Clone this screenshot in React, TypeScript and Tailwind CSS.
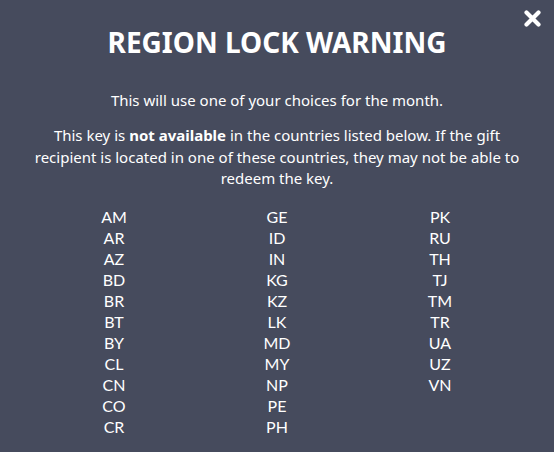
const columns = [
  ["AM", "AR", "AZ", "BD", "BR", "BT", "BY", "CL", "CN", "CO", "CR"],
  ["GE", "ID", "IN", "KG", "KZ", "LK", "MD", "MY", "NP", "PE", "PH"],
  ["PK", "RU", "TH", "TJ", "TM", "TR", "UA", "UZ", "VN"],
];

function CloseIcon() {
  return (
    <svg width="17" height="17" viewBox="0 0 17 17" aria-hidden="true">
      <path
        d="M2.5 2.5 L14.5 14.5 M14.5 2.5 L2.5 14.5"
        stroke="#ffffff"
        strokeWidth="4.2"
        strokeLinecap="round"
      />
    </svg>
  );
}

export default function App() {
  return (
    <div
      className="relative w-[554px] h-[452px] bg-[#464b5d] text-white overflow-hidden"
      style={{ fontFamily: '"Noto Sans", sans-serif' }}
    >
      <button className="absolute right-[13px] top-[10px] p-0 leading-none">
        <CloseIcon />
      </button>

      <div className="flex flex-col items-center px-[26px] pt-[26px]">
        <h1 className="text-[28px] leading-[32px] font-bold uppercase">
          Region Lock Warning
        </h1>

        <p className="mt-[31px] text-[15px] leading-[22px] text-center">
          This will use one of your choices for the month.
        </p>

        <p className="mt-[14px] text-[15px] leading-[21.5px] text-center">
          This key is <strong className="font-bold">not available</strong> in
          the countries listed below. If the gift recipient is located in one
          of these countries, they may not be able to redeem the key.
        </p>

        <div
          className="mt-[16px] grid grid-cols-3 w-[489px] text-[16px] leading-[21px]"
          style={{ fontFamily: "Lato, sans-serif" }}
        >
          {columns.map((col, i) => (
            <ul key={i} className="flex flex-col items-center">
              {col.map((code) => (
                <li key={code}>{code}</li>
              ))}
            </ul>
          ))}
        </div>
      </div>
    </div>
  );
}
